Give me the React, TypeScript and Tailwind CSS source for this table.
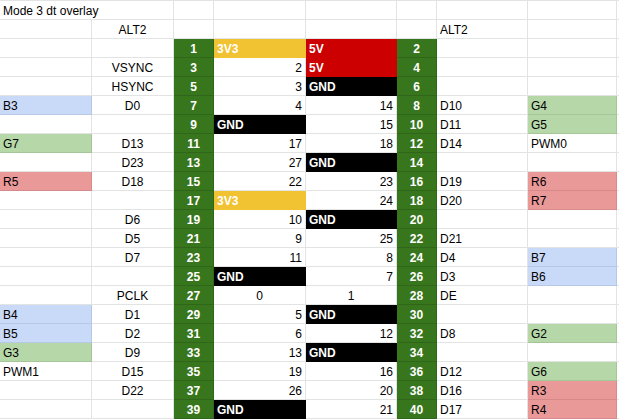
import { FC } from "react";

// pin rows: [alt col, alt2, odd pin, gpio, gpio, even pin, alt2, alt col]
// prefix "x:" gives the cell fill, "~" centres a value
const pins: string[][] = [
  ["", "", "1", "Y:3V3", "R:5V", "2", "", ""],
  ["", "VSYNC", "3", "2", "R:5V", "4", "", ""],
  ["", "HSYNC", "5", "3", "K:GND", "6", "", ""],
  ["b:B3", "D0", "7", "4", "14", "8", "D10", "g:G4"],
  ["", "", "9", "K:GND", "15", "10", "D11", "g:G5"],
  ["g:G7", "D13", "11", "17", "18", "12", "D14", "PWM0"],
  ["", "D23", "13", "27", "K:GND", "14", "", ""],
  ["r:R5", "D18", "15", "22", "23", "16", "D19", "r:R6"],
  ["", "", "17", "Y:3V3", "24", "18", "D20", "r:R7"],
  ["", "D6", "19", "10", "K:GND", "20", "", ""],
  ["", "D5", "21", "9", "25", "22", "D21", ""],
  ["", "D7", "23", "11", "8", "24", "D4", "b:B7"],
  ["", "", "25", "K:GND", "7", "26", "D3", "b:B6"],
  ["", "PCLK", "27", "~0", "~1", "28", "DE", ""],
  ["b:B4", "D1", "29", "5", "K:GND", "30", "", ""],
  ["b:B5", "D2", "31", "6", "12", "32", "D8", "g:G2"],
  ["g:G3", "D9", "33", "13", "K:GND", "34", "", ""],
  ["PWM1", "D15", "35", "19", "16", "36", "D12", "g:G6"],
  ["", "D22", "37", "26", "20", "38", "D16", "r:R3"],
  ["", "", "39", "K:GND", "21", "40", "D17", "r:R4"],
];

const fills: Record<string, string> = {
  w: "bg-white border-[#e2e3e3] text-black",
  b: "bg-[#c9daf8] border-[#b7c8e6] text-black",
  g: "bg-[#b6d7a8] border-[#a5c698] text-black",
  r: "bg-[#ea9999] border-[#d88a8a] text-black",
  Y: "bg-[#f1c232] border-[#f1c232] text-white font-bold",
  R: "bg-[#cc0000] border-[#cc0000] text-white font-bold",
  K: "bg-black border-black text-white font-bold",
  P: "bg-[#38761d] border-[#2f6619] text-white font-bold",
};

const cellBase = "flex h-[19px] px-[3px] pt-px border-r border-b leading-[18px] overflow-hidden whitespace-nowrap";

const Cell: FC<{ raw: string; col: number }> = ({ raw, col }) => {
  let kind = "w";
  let text = raw;
  if (raw.length > 2 && raw[1] === ":") {
    kind = raw[0];
    text = raw.slice(2);
  }
  let align = "justify-start";
  if (col === 1) align = "justify-center";
  if (col === 2 || col === 5) {
    kind = "P";
    align = "justify-center";
  }
  if ((col === 3 || col === 4) && /^\d+$/.test(text)) align = "justify-end";
  if (text.startsWith("~")) {
    text = text.slice(1);
    align = "justify-center";
  }
  return <div className={`${cellBase} ${align} ${fills[kind]}`}>{text}</div>;
};

export default function App() {
  return (
    <div className="w-[619px] h-[419px] overflow-hidden bg-white font-['Liberation_Sans',Arial,sans-serif] text-[12px]">
      <div className="grid grid-cols-[92px_82px_40px_92px_91px_40px_91px_89px_1fr] border-t border-[#e2e3e3]">
        <div className={`${cellBase} col-span-2 justify-start ${fills.w}`}>Mode 3 dt overlay</div>
        {Array.from({ length: 7 }).map((_, i) => (
          <div key={i} className={`${cellBase} ${fills.w}`} />
        ))}
        {["", "ALT2", "", "", "", "", "ALT2", "", ""].map((t, i) => (
          <div key={i} className={`${cellBase} ${i === 1 ? "justify-center" : "justify-start"} ${fills.w}`}>
            {t}
          </div>
        ))}
        {pins.map((row, r) => (
          <>
            {row.map((c, i) => (
              <Cell key={`${r}-${i}`} raw={c} col={i} />
            ))}
            <div key={`${r}-end`} className={`${cellBase} border-r-0 ${fills.w}`} />
          </>
        ))}
      </div>
    </div>
  );
}
